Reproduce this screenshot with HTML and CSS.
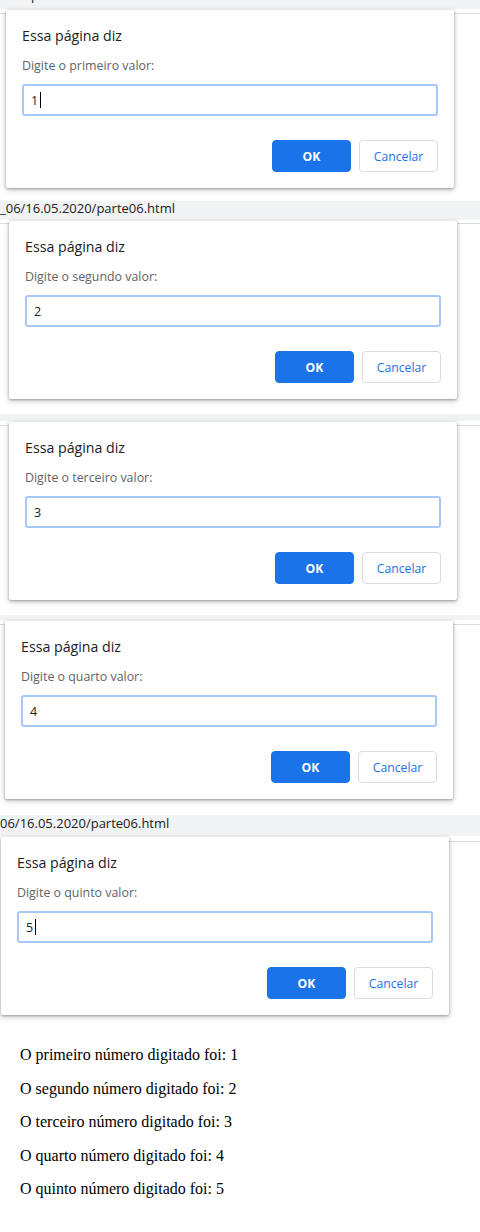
FILE: index.html
```html
<!DOCTYPE html>
<html lang="pt-BR">
<head>
<meta charset="utf-8">
<title>parte06</title>
<link rel="stylesheet" href="styles.css">
</head>
<body>
<div class="stack">

  <section class="shot shot1">
    <div class="bar"><span class="url url-top">020/parte06.html</span></div>
    <div class="band"></div>
    <div class="dialog">
      <div class="title">Essa página diz</div>
      <div class="msg">Digite o primeiro valor:</div>
      <div class="field"><span class="val">1</span><span class="caret"></span></div>
      <div class="actions">
        <button class="btn ok">OK</button>
        <button class="btn cancel">Cancelar</button>
      </div>
    </div>
  </section>

  <section class="shot shot2">
    <div class="bar"><span class="url">_06/16.05.2020/parte06.html</span></div>
    <div class="band"></div>
    <div class="dialog">
      <div class="title">Essa página diz</div>
      <div class="msg">Digite o segundo valor:</div>
      <div class="field"><span class="val">2</span></div>
      <div class="actions">
        <button class="btn ok">OK</button>
        <button class="btn cancel">Cancelar</button>
      </div>
    </div>
  </section>

  <section class="shot shot3">
    <div class="bar"></div>
    <div class="band"></div>
    <div class="dialog">
      <div class="title">Essa página diz</div>
      <div class="msg">Digite o terceiro valor:</div>
      <div class="field"><span class="val">3</span></div>
      <div class="actions">
        <button class="btn ok">OK</button>
        <button class="btn cancel">Cancelar</button>
      </div>
    </div>
  </section>

  <section class="shot shot4">
    <div class="bar"></div>
    <div class="band"></div>
    <div class="dialog">
      <div class="title">Essa página diz</div>
      <div class="msg">Digite o quarto valor:</div>
      <div class="field"><span class="val">4</span></div>
      <div class="actions">
        <button class="btn ok">OK</button>
        <button class="btn cancel">Cancelar</button>
      </div>
    </div>
  </section>

  <section class="shot shot5">
    <div class="bar"><span class="url">06/16.05.2020/parte06.html</span></div>
    <div class="band"></div>
    <div class="dialog">
      <div class="title">Essa página diz</div>
      <div class="msg">Digite o quinto valor:</div>
      <div class="field"><span class="val">5</span><span class="caret"></span></div>
      <div class="actions">
        <button class="btn ok">OK</button>
        <button class="btn cancel">Cancelar</button>
      </div>
    </div>
  </section>

  <main class="results">
    <p>O primeiro número digitado foi: 1</p>
    <p>O segundo número digitado foi: 2</p>
    <p>O terceiro número digitado foi: 3</p>
    <p>O quarto número digitado foi: 4</p>
    <p>O quinto número digitado foi: 5</p>
  </main>

</div>
</body>
</html>
```

FILE: styles.css
```css
* { box-sizing: border-box; }

html, body {
  margin: 0;
  padding: 0;
  background: #ffffff;
}

body {
  width: 480px;
  height: 1232px;
  overflow: hidden;
  font-family: "Open Sans", "Noto Sans", sans-serif;
}

.stack {
  display: flex;
  flex-direction: column;
}

.shot {
  display: flex;
  flex-direction: column;
  background: #ffffff;
}

.bar {
  background: #f1f3f4;
  overflow: hidden;
  flex: none;
}

.url {
  display: block;
  font-size: 13px;
  line-height: 18px;
  color: #202124;
  white-space: nowrap;
}

.band {
  height: 4px;
  border-bottom: 1px solid #dadce0;
  background: #ffffff;
  flex: none;
}

/* per-shot geometry */
.shot1 .bar { height: 9px; }
.shot1 .url { margin-top: -14px; padding-left: 4px; }
.shot1 .band { height: 5px; }
.shot1 .dialog { margin: -4px 0 0 6px; }
.shot1 { height: 201px; }

.shot2 .bar { height: 19px; }
.shot2 .url { margin-top: -2px; }
.shot2 .band { height: 4px; }
.shot2 .dialog { margin: -3px 0 0 9px; }
.shot2 { height: 213px; }

.shot3 .bar { height: 7px; }
.shot3 .band { height: 5px; }
.shot3 .dialog { margin: -4px 0 0 9px; }
.shot3 { height: 201px; }

.shot4 .bar { height: 5px; }
.shot4 .band { height: 5px; }
.shot4 .dialog { margin: -4px 0 0 5px; }
.shot4 { height: 200px; }

.shot5 .bar { height: 21px; }
.shot5 .url { margin-top: -1px; }
.shot5 .band { height: 6px; }
.shot5 .dialog { margin: -5px 0 0 1px; }
.shot5 { height: 200px; }

/* dialog */
.dialog {
  width: 448px;
  padding: 16px;
  background: #ffffff;
  border-radius: 2px;
  box-shadow: 0 1px 3px rgba(0, 0, 0, 0.35), 0 2px 6px 1px rgba(0, 0, 0, 0.12);
  display: flex;
  flex-direction: column;
}

.title {
  font-size: 14.2px;
  line-height: 20px;
  color: #202124;
}

.msg {
  margin-top: 12px;
  font-size: 12.4px;
  line-height: 16px;
  color: #5f6368;
}

.field {
  margin-top: 10px;
  height: 32px;
  border: 2px solid #a8c7fa;
  border-radius: 3px;
  padding: 0 7px;
  display: flex;
  align-items: center;
  font-size: 12.5px;
  color: #202124;
}

.caret {
  display: inline-block;
  width: 1px;
  height: 16px;
  margin-left: 2px;
  background: #000000;
}

.actions {
  margin-top: 24px;
  display: flex;
  justify-content: flex-end;
  gap: 8px;
}

.btn {
  width: 79px;
  height: 32px;
  border-radius: 4px;
  font-family: "Open Sans", "Noto Sans", sans-serif;
  font-size: 12.2px;
  padding: 0;
  cursor: pointer;
}

.btn.ok {
  background: #1a73e8;
  border: 1px solid #1a73e8;
  color: #ffffff;
  font-weight: 700;
}

.btn.cancel {
  background: #ffffff;
  border: 1px solid #dadce0;
  color: #1a73e8;
  font-weight: 500;
}

/* results */
.results {
  padding: 31px 0 0 20px;
  font-family: "Liberation Serif", "Times New Roman", serif;
  font-size: 16px;
  color: #000000;
}

.results p {
  margin: 0 0 16px;
  line-height: 17.5px;
}
```
